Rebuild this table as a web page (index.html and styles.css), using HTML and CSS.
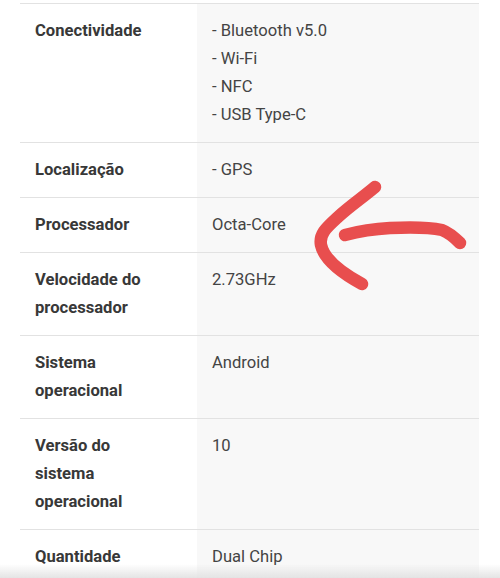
FILE: index.html
```html
<!DOCTYPE html>
<html lang="pt-BR">
<head>
    <meta charset="UTF-8">
    <meta name="viewport" content="width=device-width, initial-scale=1.0">
    <title>Especificações</title>
    <link rel="stylesheet" href="styles.css">
</head>
<body>
    <div class="specs">
        <div class="row">
            <div class="label">Conectividade</div>
            <div class="value">- Bluetooth v5.0<br>- Wi-Fi<br>- NFC<br>- USB Type-C</div>
        </div>
        <div class="row">
            <div class="label">Localização</div>
            <div class="value">- GPS</div>
        </div>
        <div class="row">
            <div class="label">Processador</div>
            <div class="value">Octa-Core</div>
        </div>
        <div class="row">
            <div class="label">Velocidade do processador</div>
            <div class="value">2.73GHz</div>
        </div>
        <div class="row">
            <div class="label">Sistema operacional</div>
            <div class="value">Android</div>
        </div>
        <div class="row">
            <div class="label">Versão do sistema operacional</div>
            <div class="value">10</div>
        </div>
        <div class="row">
            <div class="label">Quantidade</div>
            <div class="value">Dual Chip</div>
        </div>
    </div>

    <!-- marca feita à mão por cima do print -->
    <svg class="scribble" width="500" height="578" viewBox="0 0 500 578">
        <path d="M375 187 C362 198 350 206 338 217 C326 228 319 234 321 245 C324 259 340 272 362 284" />
        <path d="M345 235 C360 231 372 229 390 228 C410 227 428 227 442 230 C450 233 455 238 460 243" />
    </svg>

    <div class="fade"></div>
</body>
</html>
```
FILE: styles.css
```css
body{
    margin: 0;
    background-color: #fff;
    font-family: Roboto, 'Liberation Sans', sans-serif;
    font-size: 16.6px;
    line-height: 28px;
    height: 578px;
    overflow: hidden;
}
.specs{
    width: 459px;
    margin: 3px 0 0 20px;
    border-top: 1px solid #e2e2e2;
}
.row{
    display: grid;
    grid-template-columns: 177px 1fr;
    border-bottom: 1px solid #e2e2e2;
}
.label, .value{
    padding: 13px 15px;
}
.label{
    padding-right: 30px;
    font-weight: 700;
    color: #383838;
}
.value{
    background-color: #f8f8f8;
    color: #444;
}
.scribble{
    position: absolute;
    top: 0;
    left: 0;
    pointer-events: none;
}
.scribble path{
    fill: none;
    stroke: #e84e4e;
    stroke-width: 12.5;
    stroke-linecap: round;
    stroke-linejoin: round;
}
.fade{
    position: fixed;
    left: 0;
    right: 0;
    bottom: 0;
    height: 14px;
    background: linear-gradient(rgba(230, 230, 230, 0), rgba(225, 225, 225, 0.9));
}
```
